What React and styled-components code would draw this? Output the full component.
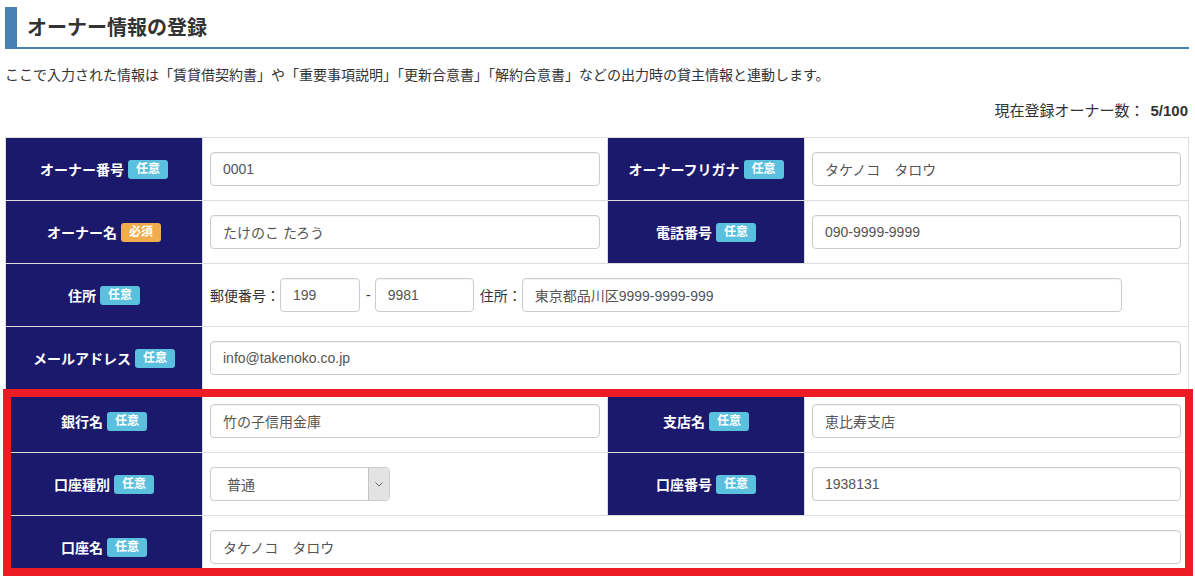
import React from 'react';
import styled, { createGlobalStyle } from 'styled-components';

const Global = createGlobalStyle`
  html, body { margin: 0; padding: 0; background: #fff; }
  body {
    font-family: "Liberation Sans", "Noto Sans CJK JP", sans-serif;
    color: #333;
    font-size: 14px;
  }
`

const Page = styled.div`
  padding: 7px 6px 0 5px;
`

const Title = styled.h2`
  margin: 0;
  display: flex;
  align-items: center;
  padding-left: 10px;
  padding-bottom: 1px;
  border-left: 12px solid #4682b4;
  border-bottom: 2px solid #4682b4;
  font-size: 20px;
  font-weight: bold;
  color: #333;
  box-sizing: border-box;
  height: 42px;
`

const Lead = styled.p`
  margin: 17px 0 0;
  line-height: 18px;
  font-size: 14px;
`

const Count = styled.div`
  margin-top: 18px;
  text-align: right;
  font-size: 15px;
  line-height: 18px;
  padding-right: 1px;
  b { font-weight: bold; margin-left: 6px; }
`

const Table = styled.div`
  margin-top: 17px;
  border-top: 1px solid #ddd;
  border-left: 1px solid #ddd;
`

const Row = styled.div`
  display: grid;
  grid-template-columns: 197px 405px 197px 1fr;
  height: 63px;
`

const Group = styled.div`
  position: relative;
`

const Highlight = styled.div`
  position: absolute;
  left: -3px;
  top: -1px;
  right: -4px;
  bottom: 3px;
  border: 8px solid #ed1c24;
  pointer-events: none;
`

const Head = styled.div`
  background: #1b196c;
  color: #fff;
  font-weight: bold;
  font-size: 14px;
  display: flex;
  align-items: center;
  justify-content: center;
  gap: 4px;
  border-right: 1px solid #ddd;
  border-bottom: 1px solid #ddd;
`

const Badge = styled.span`
  display: inline-block;
  background: ${p => (p.$required ? '#f0ad4e' : '#5bc0de')};
  color: #fff;
  font-size: 12px;
  font-weight: bold;
  line-height: 1;
  padding: 3px 8px 4px;
  border-radius: 3px;
`

const Cell = styled.div`
  display: flex;
  align-items: center;
  padding: 0 7px;
  grid-column: span ${p => p.$span || 1};
  border-right: 1px solid #ddd;
  border-bottom: 1px solid #ddd;
  font-size: 14px;
  color: #333;
`

const Input = styled.input`
  box-sizing: border-box;
  width: ${p => p.$w || '100%'};
  height: 34px;
  border: 1px solid #ccc;
  border-radius: 4px;
  padding: 0 12px;
  font-family: "Liberation Sans", "Noto Sans CJK JP", sans-serif;
  font-size: 14px;
  color: #555;
  background: #fff;
  outline: none;
  box-shadow: inset 0 1px 1px rgba(0,0,0,.05);
`

const Sep = styled.span`
  margin: 0 4px 0 6px;
`

const AddrLabel = styled.span`
  margin: 0 0 0 6px;
`

const SelectBox = styled.div`
  box-sizing: border-box;
  width: 180px;
  height: 34px;
  border: 1px solid #ccc;
  border-radius: 4px;
  display: flex;
  align-items: stretch;
  font-size: 14px;
  color: #555;
  overflow: hidden;
`

const SelectText = styled.span`
  flex: 1;
  display: flex;
  align-items: center;
  padding-left: 16px;
`

const SelectButton = styled.span`
  width: 20px;
  background: #e3e3e3;
  border-left: 1px solid #c4c4c4;
  display: flex;
  align-items: center;
  justify-content: center;
`

const Label = ({ children, required }) => (
  <Head>
    <span>{children}</span>
    <Badge $required={required}>{required ? '必須' : '任意'}</Badge>
  </Head>
)

const App = () => (
  <>
    <Global />
    <Page>
      <Title>オーナー情報の登録</Title>
      <Lead>ここで入力された情報は「賃貸借契約書」や「重要事項説明」「更新合意書」「解約合意書」などの出力時の貸主情報と連動します。</Lead>
      <Count>現在登録オーナー数：<b>5/100</b></Count>
      <Table>
        <Row>
          <Label>オーナー番号</Label>
          <Cell><Input defaultValue="0001" /></Cell>
          <Label>オーナーフリガナ</Label>
          <Cell><Input defaultValue="タケノコ　タロウ" /></Cell>
        </Row>
        <Row>
          <Label required>オーナー名</Label>
          <Cell><Input defaultValue="たけのこ たろう" /></Cell>
          <Label>電話番号</Label>
          <Cell><Input defaultValue="090-9999-9999" /></Cell>
        </Row>
        <Row>
          <Label>住所</Label>
          <Cell $span={3}>
            <span>郵便番号：</span>
            <Input $w="80px" defaultValue="199" />
            <Sep>-</Sep>
            <Input $w="99px" defaultValue="9981" />
            <AddrLabel>住所：</AddrLabel>
            <Input $w="600px" defaultValue="東京都品川区9999-9999-999" />
          </Cell>
        </Row>
        <Row>
          <Label>メールアドレス</Label>
          <Cell $span={3}><Input defaultValue="info@takenoko.co.jp" /></Cell>
        </Row>
        <Group>
          <Row>
            <Label>銀行名</Label>
            <Cell><Input defaultValue="竹の子信用金庫" /></Cell>
            <Label>支店名</Label>
            <Cell><Input defaultValue="恵比寿支店" /></Cell>
          </Row>
          <Row>
            <Label>口座種別</Label>
            <Cell>
              <SelectBox>
                <SelectText>普通</SelectText>
                <SelectButton>
                  <svg width="8" height="5" viewBox="0 0 8 5">
                    <path d="M0.5 0.5l3.5 3.5L7.5 0.5" fill="none" stroke="#666" strokeWidth="1" />
                  </svg>
                </SelectButton>
              </SelectBox>
            </Cell>
            <Label>口座番号</Label>
            <Cell><Input defaultValue="1938131" /></Cell>
          </Row>
          <Row>
            <Label>口座名</Label>
            <Cell $span={3}><Input defaultValue="タケノコ　タロウ" /></Cell>
          </Row>
          <Highlight />
        </Group>
      </Table>
    </Page>
  </>
)

export default App
